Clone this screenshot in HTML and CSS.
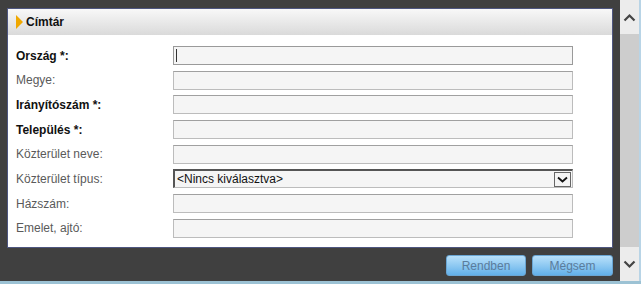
FILE: index.html
```html
<!DOCTYPE html>
<html lang="hu">
<head>
<meta charset="utf-8">
<title>Címtár</title>
<link rel="stylesheet" href="styles.css">
</head>
<body>
<div class="app">
  <div class="main">
    <div class="panel">
      <div class="panel-head">
        <span class="tri"></span>
        <span class="title">Címtár</span>
      </div>
      <div class="form">
        <label class="lbl req">Ország *:</label><div class="field focus"><span class="caret"></span></div>
        <label class="lbl">Megye:</label><div class="field"></div>
        <label class="lbl req">Irányítószám *:</label><div class="field"></div>
        <label class="lbl req">Település *:</label><div class="field"></div>
        <label class="lbl">Közterület neve:</label><div class="field"></div>
        <label class="lbl">Közterület típus:</label>
        <div class="field select"><span class="sel-text">&lt;Nincs kiválasztva&gt;</span><span class="sel-btn"><svg width="11" height="7" viewBox="0 0 11 7"><path d="M1 1.5 L5.5 5.5 L10 1.5" fill="none" stroke="#111" stroke-width="1.8"/></svg></span></div>
        <label class="lbl">Házszám:</label><div class="field"></div>
        <label class="lbl">Emelet, ajtó:</label><div class="field"></div>
      </div>
    </div>
    <div class="buttons">
      <button class="btn">Rendben</button>
      <button class="btn">Mégsem</button>
    </div>
  </div>
  <div class="scrollbar">
    <div class="sb-arrow"><svg width="13" height="9" viewBox="0 0 13 9"><path d="M1.5 7.5 L6.5 2.5 L11.5 7.5" fill="none" stroke="#444" stroke-width="2.2"/></svg></div>
    <div class="sb-thumb"></div>
    <div class="sb-arrow"><svg width="13" height="9" viewBox="0 0 13 9"><path d="M1.5 1.5 L6.5 6.5 L11.5 1.5" fill="none" stroke="#444" stroke-width="2.2"/></svg></div>
  </div>
</div>
<div class="bottom-line"></div>
</body>
</html>
```
FILE: styles.css
```css
html, body {
  margin: 0;
  padding: 0;
}
body {
  width: 641px;
  height: 284px;
  background: #404040;
  font-family: "Liberation Sans", Arial, sans-serif;
  font-size: 12px;
  overflow: hidden;
}
.app {
  display: flex;
  height: 281px;
}
.main {
  width: 622px;
  display: flex;
  flex-direction: column;
  padding: 8px 0 0 7px;
  box-sizing: border-box;
}
.panel {
  width: 606px;
  height: 240px;
  box-sizing: border-box;
  border: 1px solid #4e5680;
  background: #fff;
}
.panel-head {
  height: 26px;
  background: linear-gradient(#f8f8f8, #dadada);
  display: flex;
  align-items: center;
  padding-left: 8px;
}
.tri {
  width: 0;
  height: 0;
  border-top: 7px solid transparent;
  border-bottom: 7px solid transparent;
  border-left: 7px solid #f0a800;
  margin-right: 3px;
}
.title {
  font-weight: bold;
  color: #111;
}
.form {
  display: grid;
  grid-template-columns: 157px 400px;
  grid-auto-rows: 19px;
  row-gap: 5.7px;
  padding: 11px 0 0 8px;
  align-items: center;
}
.lbl {
  color: #5a5a5a;
  font-size: 12px;
}
.lbl.req {
  color: #111;
  font-weight: bold;
}
.field {
  height: 19px;
  box-sizing: border-box;
  border: 1px solid #bcbcbc;
  border-top-color: #a0a0a0;
  background: #f5f5f5;
  position: relative;
}
.field.focus {
  border-color: #9a9a9a;
}
.caret {
  position: absolute;
  left: 2px;
  top: 2px;
  width: 1px;
  height: 13px;
  background: #333;
}
.field.select {
  border-top: 2px solid #555;
  border-left: 2px solid #555;
  display: flex;
  align-items: center;
  justify-content: space-between;
}
.sel-text {
  color: #111;
  padding-left: 2px;
}
.sel-btn {
  width: 17px;
  height: 15px;
  box-sizing: border-box;
  border: 1px solid #666;
  background: #f4f4f4;
  display: flex;
  align-items: center;
  justify-content: center;
  margin-right: 1px;
}
.buttons {
  display: flex;
  justify-content: flex-end;
  gap: 6px;
  padding-top: 7px;
  width: 606px;
}
.btn {
  height: 21px;
  width: 80px;
  border: 1px solid #6aa6d4;
  border-radius: 3px;
  background: linear-gradient(#b8e0fa, #8ec9f2 50%, #62b0ea);
  color: #5a7c9c;
  font-family: "Liberation Sans", Arial, sans-serif;
  font-size: 12px;
  padding: 0;
}
.btn + .btn {
  width: 81px;
}
.scrollbar {
  width: 19px;
  display: flex;
  flex-direction: column;
  background: #e8e8e8;
  border-right: 2px solid #b8d4e6;
}
.sb-arrow {
  height: 34px;
  display: flex;
  align-items: center;
  justify-content: center;
  background: #ececec;
}
.sb-thumb {
  flex: 1;
  background: #cdcdcd;
}
.bottom-line {
  height: 3px;
  background: #9cc2d4;
}
```
